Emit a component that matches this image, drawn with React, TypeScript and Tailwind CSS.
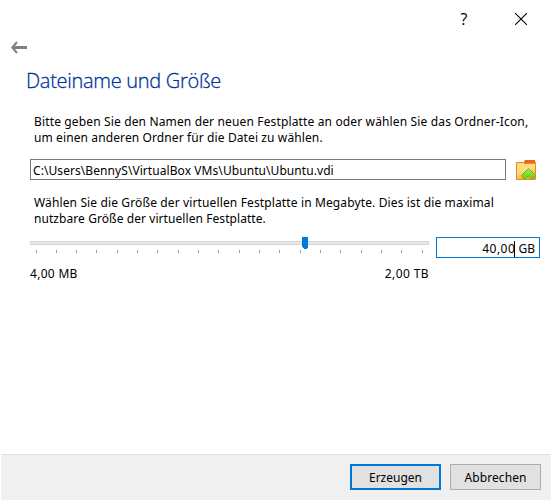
import React from 'react';

const ticks = [6, 26, 46, 66, 87, 107, 127, 148, 168, 188, 209, 229, 249, 270, 290, 310, 331, 351, 371, 392];

function FolderIcon() {
  return (
    <svg width="20" height="20" viewBox="0 0 20 20" className="block">
      <defs>
        <linearGradient id="folder" x1="0" y1="0" x2="0.4" y2="1">
          <stop offset="0" stopColor="#ffd870" />
          <stop offset="0.5" stopColor="#ffe080" />
          <stop offset="1" stopColor="#fba92c" />
        </linearGradient>
        <linearGradient id="arrow" x1="0" y1="0" x2="0" y2="1">
          <stop offset="0" stopColor="#a6ee4e" />
          <stop offset="1" stopColor="#58d80e" />
        </linearGradient>
      </defs>
      <path d="M7 4L8.500 .5Q8.800 0 9.500 0H18.500Q19 0 19.200 1L20 5H7Z" fill="#f0641c" />
      <path d="M.5 2.500H7.500L8.500 3.500H19.500V19.500H.5Z" fill="url(#folder)" stroke="#e88b28" />
      <path d="M12.500 8.500L19.500 15.500L17.500 18.500H15.500L12.500 15.800L9.500 18.500H7.500L5.500 15.500Z" fill="url(#arrow)" stroke="#66b82a" />
    </svg>
  );
}

export default function App() {
  return (
    <div className="flex h-[501px] w-[552px] flex-col overflow-hidden bg-white pb-px font-['Noto_Sans','Open_Sans',sans-serif] text-[12px] leading-4 text-black">
      <header className="flex h-10 shrink-0 justify-end pr-[25px] pt-[13px]">
        <button className="-mt-0.5 mr-[47px] h-4 w-2 font-['Open_Sans',sans-serif] text-[16px] leading-4">?</button>
        <button className="h-3 w-3">
          <svg width="12" height="12" viewBox="0 0 12 12" className="block"><path d="M0 0L12 12M12 0L0 12" stroke="#000" strokeWidth="1.1" /></svg>
        </button>
      </header>
      <div className="flex h-[28px] shrink-0 pl-[11px] pt-px">
        <svg width="16" height="13" viewBox="0 0 16 13"><path d="M16 6.500H2" stroke="#808080" strokeWidth="3" /><path d="M6 1L1.300 6.500L6 12" fill="none" stroke="#808080" strokeWidth="2" /></svg>
      </div>
      <main className="flex grow flex-col">
        <h1 className="h-[46px] pl-[26px] font-['Open_Sans','Noto_Sans',sans-serif] text-[20px] leading-[26px] font-light tracking-[-0.29px] whitespace-nowrap text-[#003399] [-webkit-text-stroke:0.3px_#003399]"><span>Dateiname und Größe</span></h1>
        <p className="h-[45px] pl-[34px] whitespace-nowrap"><span className="tracking-[0.145px]">Bitte geben Sie den Namen der neuen Festplatte an oder wählen Sie das Ordner-Icon,</span><br /><span className="tracking-[0.11px]">um einen anderen Ordner für die Datei zu wählen.</span></p>
        <div className="flex h-[36px] pl-[30px]">
          <div className="mr-[10px] h-[21px] w-[476px] border border-[#7a7a7a] pl-[2px] pt-[3px]"><span className="tracking-[0.07px]">C:\Users\BennyS\VirtualBox VMs\Ubuntu\Ubuntu.vdi</span></div>
          <button className="mt-px h-5 w-5"><FolderIcon /></button>
        </div>
        <p className="h-[42px] pl-[34px] whitespace-nowrap"><span className="tracking-[0.13px]">Wählen Sie die Größe der virtuellen Festplatte in Megabyte. Dies ist die maximal</span><br /><span className="tracking-[0.07px]">nutzbare Größe der virtuellen Festplatte.</span></p>
        <div className="flex pl-[30px]">
          <div className="mr-[7px] w-[399px]">
            <svg width="399" height="29" viewBox="0 0 399 29" className="block" shapeRendering="crispEdges">
              <rect x=".5" y="4.500" width="398" height="3" fill="#e7eaea" stroke="#d6d6d6" />
              {ticks.map((x) => <rect key={x} x={x} y="13" width="1" height="3" fill="#a0a090" />)}
              <path d="M272 0H278V10L276 12H274L272 10Z" fill="#0078d7" />
            </svg>
            <div className="flex justify-between tracking-[0.3px] whitespace-nowrap"><span>4,00 MB</span><span className="tracking-[0.4px]">2,00 TB</span></div>
          </div>
          <div className="flex h-[21px] w-[104px] justify-end border border-[#0078d7] pr-1 pt-[3px] whitespace-pre">
            <span className="tracking-[0.5px]">40,00</span><i className="-ml-px h-4 w-px bg-black" /><span> GB</span>
          </div>
        </div>
      </main>
      <footer className="mx-px flex h-[46px] shrink-0 justify-end gap-[9px] border-t border-[#dfdfdf] bg-[#f0f0f0] pr-[10px] pt-[9px]">
        <button className="h-[26px] w-[91px] border-2 border-[#0078d7] bg-[#e1e1e1] pt-[2px]">Erzeugen</button>
        <button className="h-[26px] w-[91px] border border-[#adadad] bg-[#e1e1e1] pt-[2px] tracking-[0.1px]">Abbrechen</button>
      </footer>
    </div>
  );
}
